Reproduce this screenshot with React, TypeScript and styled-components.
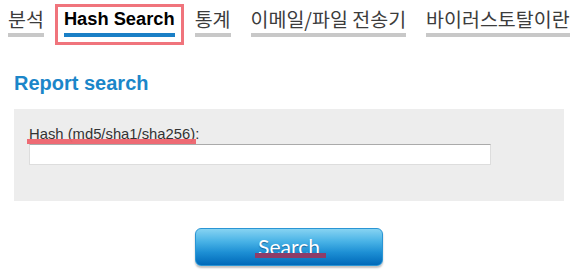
import React from "react";
import styled, { createGlobalStyle } from "styled-components";

const Global = createGlobalStyle`
  html, body { margin: 0; padding: 0; background: #ffffff; }
  body { font-family: "Liberation Sans", Arial, sans-serif; color: #333; }
`;

const Page = styled.div`
  width: 572px;
  height: 276px;
  overflow: hidden;
`;

const Nav = styled.nav`
  display: flex;
  align-items: flex-start;
  gap: 20px;
  padding: 4px 0 0 8px;
`;

const Tab = styled.a`
  display: block;
  margin-top: 4px;
  font-family: "Noto Sans CJK KR", "Liberation Sans", sans-serif;
  font-size: 19.5px;
  line-height: 22px;
  color: #3c3c3c;
  text-decoration: none;
  padding-bottom: 3px;
  border-bottom: 4px solid #c8c8c8;
  white-space: nowrap;
`;

const ActiveFrame = styled.div`
  margin: 0 -9px;
  border: 3px solid #f0747c;
  padding: 1px 6px 5px;
`;

const ActiveTab = styled(Tab)`
  margin-top: 0;
  font-family: "Liberation Sans", Arial, sans-serif;
  font-size: 18.3px;
  font-weight: bold;
  color: #000;
  border-bottom-color: #1a7fc6;
`;

const Content = styled.main`
  padding: 0 8px 0 14px;
`;

const Heading = styled.h2`
  margin: 26px 0 14px;
  font-size: 20px;
  line-height: 24px;
  font-weight: bold;
  color: #1b86c9;
`;

const Panel = styled.section`
  width: 550px;
  box-sizing: border-box;
  background: #ededed;
  padding: 17px 15px 36px;
`;

const Label = styled.label`
  display: block;
  font-size: 14.8px;
  line-height: 17px;
  color: #333;
`;

const Marked = styled.span<{ $color: string; $left: number; $right: number; $bottom: number }>`
  position: relative;
  &::after {
    content: "";
    position: absolute;
    left: ${(p) => p.$left}px;
    right: ${(p) => p.$right}px;
    bottom: ${(p) => p.$bottom}px;
    height: 5px;
    background: ${(p) => p.$color};
  }
`;

const Input = styled.input`
  display: block;
  box-sizing: border-box;
  margin: 1px 0 0 0;
  width: 462px;
  height: 21px;
  border: 1px solid #dddddd;
  border-top-color: #aaaaaa;
  background: #fff;
  outline: none;
`;

const ButtonRow = styled.div`
  width: 550px;
  display: flex;
  justify-content: center;
  padding-top: 27px;
`;

const SearchButton = styled.button`
  width: 188px;
  height: 38px;
  border: 1px solid #2a95d4;
  border-radius: 6px;
  background: linear-gradient(to bottom, #86d3f2 0%, #48b2e6 35%, #1d8fd4 65%, #0069b9 100%);
  box-shadow: 0 2px 2px rgba(0, 0, 0, 0.25);
  color: #fff;
  font-family: Lato, "Liberation Sans", sans-serif;
  font-size: 21px;
  line-height: 36px;
  padding: 0;
  text-shadow: 0 1px 1px rgba(0, 40, 90, 0.5);
  cursor: pointer;
`;

export default function App() {
  return (
    <Page>
      <Global />
      <Nav>
        <Tab href="#">분석</Tab>
        <ActiveFrame>
          <ActiveTab href="#">Hash Search</ActiveTab>
        </ActiveFrame>
        <Tab href="#">통계</Tab>
        <Tab href="#">이메일/파일 전송기</Tab>
        <Tab href="#">바이러스토탈이란</Tab>
      </Nav>
      <Content>
        <Heading>Report search</Heading>
        <Panel>
          <Label htmlFor="hash">
            <Marked $color="rgba(238, 100, 110, 0.95)" $left={-2} $right={-1} $bottom={-2}>
              Hash (md5/sha1/sha256)
            </Marked>
            :
          </Label>
          <Input id="hash" type="text" />
        </Panel>
        <ButtonRow>
          <SearchButton>
            <Marked $color="#8e3c68" $left={-3} $right={-6} $bottom={1}>
              Search
            </Marked>
          </SearchButton>
        </ButtonRow>
      </Content>
    </Page>
  );
}
